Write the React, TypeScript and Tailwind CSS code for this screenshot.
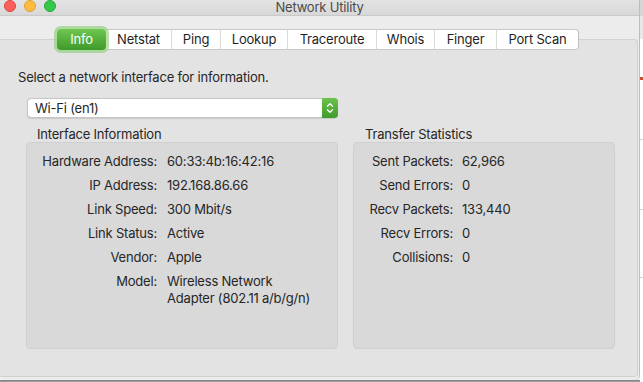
import React from "react";

const tabs: { label: string; w: string; active?: boolean }[] = [
  { label: "Info", w: "w-[49px]", active: true },
  { label: "Netstat", w: "w-[66px]" },
  { label: "Ping", w: "w-[49px]" },
  { label: "Lookup", w: "w-[67px]" },
  { label: "Traceroute", w: "w-[89px]" },
  { label: "Whois", w: "w-[58px]" },
  { label: "Finger", w: "w-[62px]" },
  { label: "Port Scan", w: "w-[82px]" },
];

const ifaceRows: [string, string][] = [
  ["Hardware Address:", "60:33:4b:16:42:16"],
  ["IP Address:", "192.168.86.66"],
  ["Link Speed:", "300 Mbit/s"],
  ["Link Status:", "Active"],
  ["Vendor:", "Apple"],
  ["Model:", "Wireless Network Adapter (802.11 a/b/g/n)"],
];

const statRows: [string, string][] = [
  ["Sent Packets:", "62,966"],
  ["Send Errors:", "0"],
  ["Recv Packets:", "133,440"],
  ["Recv Errors:", "0"],
  ["Collisions:", "0"],
];

function Light({ cls }: { cls: string }) {
  return <div className={`w-[12px] h-[12px] rounded-full border ${cls}`} />;
}

export default function App() {
  return (
    <div className="w-[643px] h-[382px] flex overflow-hidden bg-[#f2f2f2] font-['Inter',sans-serif] text-[13px] tracking-[-0.2px] text-[#262626]">
      <div className="w-[640px] h-[382px] flex flex-col shrink-0">
        <div className="h-[380px] flex flex-col bg-[#ececec] rounded-b-[5px] border-r border-[#bdbdbd] overflow-hidden">
          {/* Title bar */}
          <div className="h-[16px] grid grid-cols-[1fr_auto_1fr] bg-gradient-to-b from-[#e3e3e3] to-[#d8d8d8] border-b border-[#c9c9c9]">
            <div className="flex gap-[8px] pl-[4px]">
              <Light cls="bg-[#fc605c] border-[#e0443e]" />
              <Light cls="bg-[#fdbc40] border-[#dea236]" />
              <Light cls="bg-[#34c84a] border-[#27aa35]" />
            </div>
            <div className="leading-[14px] text-[#4b4b4b]">Network Utility</div>
            <div />
          </div>

          {/* Tab strip band */}
          <div className="pt-[13px] pl-[57px] bg-[#ececec]">
            <div className="flex h-[21px] -mb-[11px] relative z-10">
              {tabs.map((t, i) =>
                t.active ? (
                  <div
                    key={t.label}
                    className={`${t.w} h-[21px] flex items-center justify-center rounded-[4px] bg-gradient-to-b from-[#6fc650] to-[#3d9a2a] text-white ring-[3px] ring-[#86cd6e]/60 relative z-10`}
                  >
                    {t.label}
                  </div>
                ) : (
                  <div
                    key={t.label}
                    className={`${t.w} h-[21px] flex items-center justify-center bg-white border-y border-[#c8c8c8] ${
                      i === tabs.length - 1
                        ? "border-r border-r-[#bfbfbf] rounded-r-[4px]"
                        : "border-r border-r-[#dadada]"
                    } text-[#1f1f1f]`}
                  >
                    {t.label}
                  </div>
                )
              )}
            </div>
          </div>

          {/* Tab content */}
          <div className="flex-1 bg-[#e3e3e3] border-t border-r border-b border-[#d1d1d1] rounded-r-[4px] mr-[1px] mb-[3px]">
            <div className="pt-[29px] pl-[18px] leading-[16px]">
              Select a network interface for information.
            </div>

            <div className="mt-[13px] ml-[27px] w-[311px] h-[20px] flex bg-white rounded-[4px] border border-[#c6c6c6] shadow-[0_0.5px_1px_rgba(0,0,0,0.12)]">
              <div className="flex-1 pl-[7px] leading-[18px]">Wi-Fi (en1)</div>
              <div className="w-[16px] -my-[1px] -mr-[1px] rounded-r-[4px] bg-gradient-to-b from-[#6cc34d] to-[#3f9b2b] flex items-center justify-center">
                <svg width="16" height="20" viewBox="0 0 16 20" fill="none">
                  <path d="M5.5 8.2 L8 5.7 L10.5 8.2" stroke="white" strokeWidth="1.3" strokeLinecap="round" strokeLinejoin="round" />
                  <path d="M5.5 11.8 L8 14.3 L10.5 11.8" stroke="white" strokeWidth="1.3" strokeLinecap="round" strokeLinejoin="round" />
                </svg>
              </div>
            </div>

            <div className="mt-[8px] ml-[26px] flex gap-[15px]">
              <div className="w-[312px] flex flex-col">
                <div className="pl-[11px] leading-[16px]">Interface Information</div>
                <div className="h-[207px] bg-[#d9d9d9] border border-[#d0d0d0] rounded-[4px] pt-[10px]">
                  <div className="grid grid-cols-[130px_152px] gap-x-[10px] gap-y-[7px] leading-[17px]">
                    {ifaceRows.map(([k, v]) => (
                      <React.Fragment key={k}>
                        <div className="text-right whitespace-nowrap">{k}</div>
                        <div>{v}</div>
                      </React.Fragment>
                    ))}
                  </div>
                </div>
              </div>
              <div className="w-[262px] flex flex-col">
                <div className="pl-[12px] leading-[16px]">Transfer Statistics</div>
                <div className="h-[207px] bg-[#d9d9d9] border border-[#d0d0d0] rounded-[4px] pt-[10px]">
                  <div className="grid grid-cols-[99px_1fr] gap-x-[9px] gap-y-[7px] leading-[17px]">
                    {statRows.map(([k, v]) => (
                      <React.Fragment key={k}>
                        <div className="text-right whitespace-nowrap">{k}</div>
                        <div>{v}</div>
                      </React.Fragment>
                    ))}
                  </div>
                </div>
              </div>
            </div>
          </div>
        </div>
        <div className="h-[2px] bg-gradient-to-b from-[#7a7a7a] to-[#a8a8a8]" />
      </div>

      {/* background window sliver */}
      <div className="flex-1 flex flex-col">
        <div className="h-[16px] bg-[#d6d6d6]" />
        <div className="h-[23px] bg-[#e8e8e8]" />
        <div className="h-[38px] bg-white" />
        <div className="h-[3px] bg-[#c8552b]" />
        <div className="h-[60px] bg-white border-b border-[#cdd3dc]" />
        <div className="h-[70px] bg-white border-b border-[#cdd3dc]" />
        <div className="h-[68px] bg-white border-b border-[#cdd3dc]" />
        <div className="flex-1 bg-white" />
      </div>
    </div>
  );
}
